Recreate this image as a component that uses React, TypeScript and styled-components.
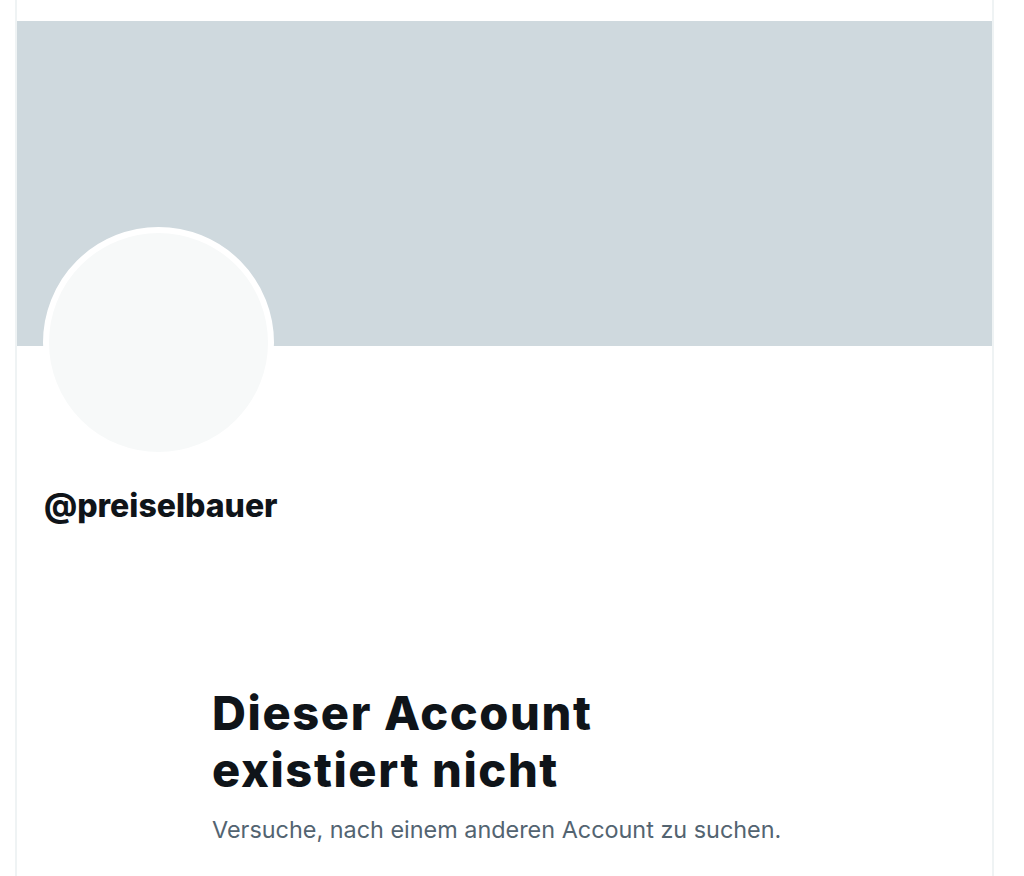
import React from "react";
import styled, { createGlobalStyle } from "styled-components";

const Global = createGlobalStyle`
  html, body { margin: 0; padding: 0; background: #ffffff; }
  body { font-family: Inter, "Noto Sans", "Liberation Sans", sans-serif; color: #0f1419; }
`;

const Page = styled.div`
  display: flex;
  min-height: 876px;
  padding-left: 15px;
`;

const Column = styled.main`
  width: 975px;
  min-height: 876px;
  border-left: 2px solid #eff3f4;
  border-right: 2px solid #eff3f4;
  padding-top: 21px;
  display: flex;
  flex-direction: column;
`;

const Banner = styled.div`
  height: 325px;
  background: #cfd9de;
`;

const ProfileInfo = styled.div`
  padding: 0 26px;
  display: flex;
  flex-direction: column;
  align-items: flex-start;
`;

const Avatar = styled.div`
  width: 219px;
  height: 219px;
  margin-top: -119px;
  border: 6px solid #ffffff;
  border-radius: 50%;
  background: #f7f9f9;
  position: relative;
`;

const Handle = styled.div`
  margin-top: 29px;
  margin-left: 1px;
  font-size: 32px;
  line-height: 38px;
  font-weight: 800;
  color: #0f1419;
`;

const Empty = styled.section`
  width: 585px;
  margin: 159px auto 0;
`;

const Title = styled.h1`
  margin: 0;
  font-size: 47px;
  line-height: 57px;
  font-weight: 800;
  letter-spacing: 1.6px;
  color: #0f1419;
`;

const Sub = styled.p`
  margin: 16px 0 0;
  font-size: 23.4px;
  line-height: 32px;
  font-weight: 400;
  color: #536471;
`;

export default function App() {
  return (
    <>
      <Global />
      <Page>
        <Column>
          <Banner />
          <ProfileInfo>
            <Avatar />
            <Handle>@preiselbauer</Handle>
          </ProfileInfo>
          <Empty>
            <Title>Dieser Account existiert nicht</Title>
            <Sub>Versuche, nach einem anderen Account zu suchen.</Sub>
          </Empty>
        </Column>
      </Page>
    </>
  );
}
